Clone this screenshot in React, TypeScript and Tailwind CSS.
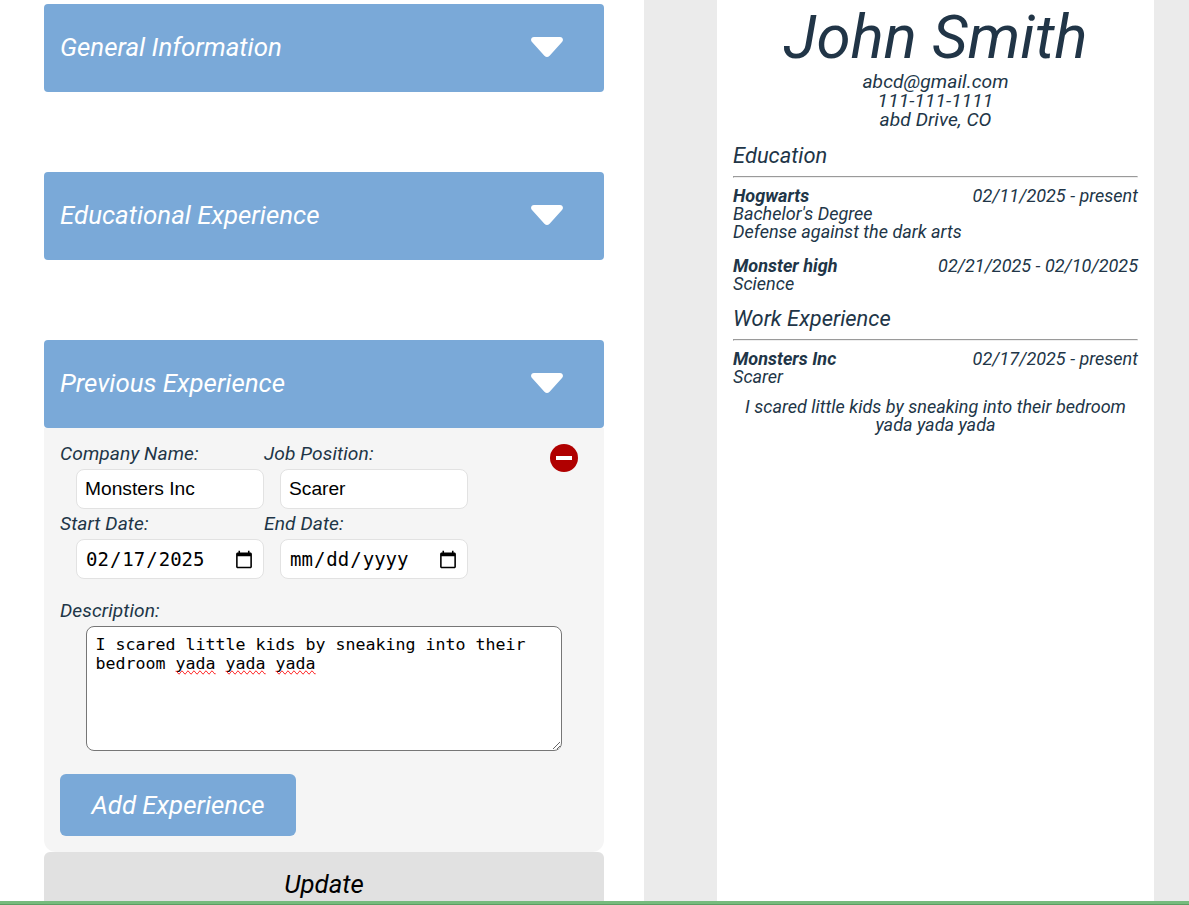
import React from "react";

function Triangle() {
  return (
    <svg className="mr-[41px] block" width="32" height="20" viewBox="0 0 32 20" fill="#fff">
      <path d="M3 0H29C31.6 0 33 3 31 5.1L18.6 18.7Q16 21.2 13.4 18.7L1 5.1C-1 3 .4 0 3 0Z" />
    </svg>
  );
}

function SectionBar({ title }: { title: string }) {
  return (
    <div className="flex h-[88px] shrink-0 items-center justify-between rounded-[4px] bg-[#7aa9d8] pb-[2px] pl-4 text-[25.85px] leading-[30px] text-white">
      <span>{title}</span>
      <Triangle />
    </div>
  );
}

function Field({ label, value, type }: { label: string; value: string; type: string }) {
  return (
    <label className="flex w-[204px] flex-col">
      <span className="h-[25px] leading-[19px]">{label}</span>
      <input
        type={type}
        defaultValue={value}
        className={
          type === "date"
            ? "ml-4 h-10 w-[188px] rounded-[8px] border border-[#e2e2e2] bg-white px-2 font-['DejaVu_Sans_Mono',monospace] text-[19px] leading-normal not-italic tracking-normal text-black [&::-webkit-calendar-picker-indicator]:-mr-px [&::-webkit-calendar-picker-indicator]:mt-[2px] [&::-webkit-calendar-picker-indicator]:size-5"
            : "ml-4 h-10 w-[188px] rounded-[8px] border border-[#e2e2e2] bg-white px-2 font-['Liberation_Sans',sans-serif] text-[19.2px] leading-normal not-italic tracking-normal text-black"
        }
      />
    </label>
  );
}

function Entry({ name, dates, lines }: { name: string; dates: string; lines: string[] }) {
  return (
    <div>
      <div className="flex justify-between">
        <b className="font-bold">{name}</b>
        <span>{dates}</span>
      </div>
      {lines.map((line) => (
        <p key={line}>{line}</p>
      ))}
    </div>
  );
}

const misspelled = "[text-decoration-line:spelling-error]";

export default function App() {
  return (
    <div className="relative flex h-[905px] w-[1189px] overflow-hidden bg-white font-['Roboto',sans-serif] italic text-[#213547]">
      <div className="flex w-[644px] shrink-0 flex-col pl-11 pr-10 pt-1">
        <SectionBar title="General Information" />
        <div className="h-20 shrink-0" />
        <SectionBar title="Educational Experience" />
        <div className="h-20 shrink-0" />
        <SectionBar title="Previous Experience" />
        <div className="flex h-[424px] shrink-0 flex-col rounded-b-[12px] bg-[#f5f5f5] px-4 pt-4 text-[19.2px] leading-[19px] tracking-[0.08px]">
          <div className="flex justify-between">
            <div className="grid grid-cols-[204px_204px] gap-y-[5px]">
              <Field label="Company Name:" value="Monsters Inc" type="text" />
              <Field label="Job Position:" value="Scarer" type="text" />
              <Field label="Start Date:" value="2025-02-17" type="date" />
              <Field label="End Date:" value="" type="date" />
            </div>
            <button className="mr-[10px] flex size-7 items-center justify-center rounded-full bg-[#b00000]" aria-label="Remove">
              <span className="h-1 w-4 bg-white" />
            </button>
          </div>
          <span className="mt-[22px]">Description:</span>
          <div className="ml-[26px] mt-[6px] h-[125px] w-[476px] shrink-0 resize overflow-auto rounded-[8px] border border-[#767676] bg-white px-[8.6px] py-2 font-['DejaVu_Sans_Mono',monospace] text-[16.62px] leading-[19px] not-italic tracking-normal text-black">
            I scared little kids by sneaking into their
            <br />
            bedroom <span className={misspelled}>yada</span> <span className={misspelled}>yada</span>{" "}
            <span className={misspelled}>yada</span>
          </div>
          <button className="mt-[23px] h-[62px] w-[236px] shrink-0 rounded-[6px] bg-[#7aa9d8] text-[25.85px] italic leading-[30px] tracking-normal text-white">
            Add Experience
          </button>
        </div>
        <div className="h-[62px] shrink-0 rounded-[6px] bg-[#e1e1e1] pt-[17px] text-center text-[25.85px] leading-[30px] text-black">
          Update
        </div>
      </div>
      <div className="flex flex-1 bg-[#ebebeb] pl-[73px]">
        <main className="w-[437px] bg-white px-4 text-[18px] leading-[18px] tracking-[0.02px]">
          <h1 className="pt-[7px] text-center text-[61.8px] leading-[61px]">John Smith</h1>
          <div className="mt-1 text-center text-[19.2px] leading-[19px] tracking-[0.08px]">
            <p>abcd@gmail.com</p>
            <p>111-111-1111</p>
            <p>abd Drive, CO</p>
          </div>
          <h2 className="mt-4 text-[21.9px] leading-[22px]">Education</h2>
          <hr className="mb-[9px] mt-[9px] h-[2px] border border-b-[#eee] border-l-[#9a9a9a] border-r-[#eee] border-t-[#9a9a9a]" />
          <Entry name="Hogwarts" dates="02/11/2025 - present" lines={["Bachelor's Degree", "Defense against the dark arts"]} />
          <div className="h-4" />
          <Entry name="Monster high" dates="02/21/2025 - 02/10/2025" lines={["Science"]} />
          <h2 className="mt-[15px] text-[21.9px] leading-[22px]">Work Experience</h2>
          <hr className="mb-[9px] mt-[9px] h-[2px] border border-b-[#eee] border-l-[#9a9a9a] border-r-[#eee] border-t-[#9a9a9a]" />
          <Entry name="Monsters Inc" dates="02/17/2025 - present" lines={["Scarer"]} />
          <p className="mt-3 text-center">I scared little kids by sneaking into their bedroom yada yada yada</p>
        </main>
      </div>
      <div className="absolute inset-x-0 bottom-0 h-1 border-b border-[#5c9e63] bg-[#77bb7d]" />
    </div>
  );
}
